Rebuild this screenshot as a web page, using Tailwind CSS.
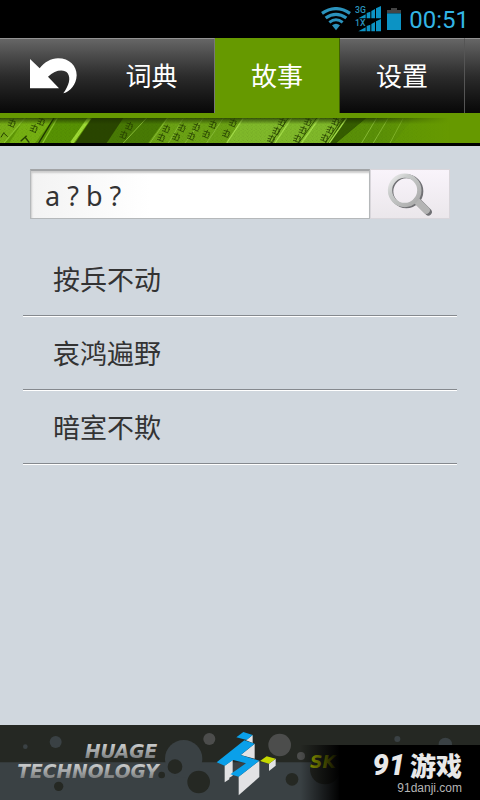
<!DOCTYPE html>
<html lang="zh-CN">
<head>
<meta charset="utf-8">
<meta name="viewport" content="width=device-width, initial-scale=1">
<title>故事</title>
<script src="https://cdn.jsdelivr.net/npm/@tailwindcss/browser@4"></script>
</head>
<body class="flex min-h-screen flex-col bg-[#d0d7de] font-['Noto_Sans','Noto_Sans_CJK_SC',sans-serif] text-[#333]">

<!-- Status bar -->
<div class="flex h-[38px] items-center justify-end bg-black pr-[11px] text-[#33b5e5]">
  <svg class="mr-1 h-[24px] w-[30px]" viewBox="0 0 90 72" fill="none" stroke="#2b93bd" aria-hidden="true">
    <path d="M3 19Q45 -9 87 19" stroke-width="10"/>
    <path d="M14 33Q45 11 76 33" stroke-width="10"/>
    <path d="M25 46Q45 31 65 46" stroke-width="9"/>
    <path d="M33 55Q45 46 57 55L45 70Z" fill="#2b93bd" stroke="none"/>
  </svg>
  <svg class="mr-[6px] h-[26px] w-[26px]" viewBox="0 0 78 78" fill="#0c93c4" aria-hidden="true">
    <text x="0" y="21" font-family="Roboto, sans-serif" font-size="26" font-weight="500" fill="#2b93bd">3G</text>
    <text x="0" y="60" font-family="Roboto, sans-serif" font-size="26" font-weight="500" fill="#2b93bd">1X</text>
    <path d="M10 37L32 25V37ZM35 21L46 17V37H35ZM49 15L60 9V37H49ZM63 7L78 0V37H63Z"/>
    <path d="M10 76L32 64V76ZM35 60L46 56V76H35ZM49 54L60 48V76H49ZM63 46L78 39V76H63Z"/>
  </svg>
  <svg class="mr-2 h-[22px] w-[14px]" viewBox="0 0 42 66" aria-hidden="true">
    <path d="M12 0H30V6H42V16H0V6H12Z" fill="#444"/>
    <path d="M0 16H42V66H0Z" fill="#0c93c4"/>
  </svg>
  <time class="pt-[2px] font-[Roboto,sans-serif] text-2xl leading-none">00:51</time>
</div>

<!-- Navigation -->
<header class="border-b-[3px] border-black bg-[#669900]">
  <nav class="flex h-[75px] text-[26px] text-white">
    <button type="button" aria-label="返回" class="flex w-[89px] items-center border-t border-[#929292] bg-linear-to-b from-[#666] via-[#2c2c2c] to-[#080808] pl-[30px]">
      <svg class="h-[36px] w-[47px]" viewBox="90 65 141 108" aria-hidden="true">
        <path d="M90 68L119 96C134 77 153 66 174 66C209 66 230 89 230 117C229 145 211 166 190 171C207 148 213 126 203 111C194 98 166 99 144 121L177 156H90Z" fill="#fff"/>
      </svg>
    </button>
    <a href="#dict" class="flex w-[126px] items-center justify-center border-t border-r border-t-[#929292] border-r-[#777] bg-linear-to-b from-[#666] via-[#2c2c2c] to-[#080808]">词典</a>
    <a href="#story" aria-current="page" class="flex w-[125px] items-center justify-center border-t border-r border-t-[#669900] border-r-[#3f6000] bg-[#669900]">故事</a>
    <a href="#settings" class="flex w-[125px] items-center justify-center border-t border-r border-t-[#929292] border-r-[#555] bg-linear-to-b from-[#666] via-[#2c2c2c] to-[#080808]">设置</a>
    <div class="flex-1 border-t border-[#929292] bg-linear-to-b from-[#666] via-[#2c2c2c] to-[#080808]"></div>
  </nav>
  <svg class="mt-[5px] block h-[25px] w-full" viewBox="0 0 1440 75" preserveAspectRatio="none" aria-hidden="true">
    <defs>
      <linearGradient id="shade" x2="0" y2="1"><stop stop-color="#1c3000" stop-opacity=".75"/><stop offset=".25" stop-color="#1c3000" stop-opacity="0"/></linearGradient>
      <linearGradient id="fade"><stop stop-color="#669900" stop-opacity="0"/><stop offset="1" stop-color="#669900"/></linearGradient>
      <g id="marks" fill="none" stroke="#254000" stroke-opacity=".8" stroke-width="3"><path d="M6 0L24 5L20 12M3 8L12 10M18 -3L9 18L20 22M1 15L10 17M24 10L18 20"/></g>
      <pattern id="grain" width="13" height="11" patternUnits="userSpaceOnUse"><path d="M0 1H3M7 4H9M3 8H5M10 9H12" stroke="#1e3500" stroke-opacity=".25" stroke-width="2"/></pattern>
    </defs>
    <path d="M0 0H1440V75H0Z" fill="#5f9705"/>
    <path d="M0 0H75L10 75H0Z" fill="#77ae16"/>
    <path d="M75 0H162L105 75H28Z" fill="#76b112"/>
    <path d="M162 0H270L212 75H118Z" fill="#579203"/>
    <path d="M162 0L116 75" stroke="#1c3300" stroke-width="4"/>
    <path d="M75 0L12 75M172 0L128 75" stroke="#8ac42a" stroke-width="4"/>
    <path d="M268 0L215 75" stroke="#9edb35" stroke-width="10"/>
    <path d="M276 0H395L320 75H225Z" fill="#294500"/>
    <path d="M370 0H500L445 75H320Z" fill="#487a04"/>
    <path d="M500 0H730L680 75H445Z" fill="#6ba214"/>
    <path d="M730 0H1030L985 75H680Z" fill="#80b92a"/>
    <path d="M1030 0H1100L1010 75H985Z" fill="#355d00"/>
    <path d="M1100 0H1240L1180 75H1010Z" fill="#5a9007"/>
    <path d="M440 0L370 75M503 0L450 75M550 0L505 75M610 0L555 75M670 0L620 75M1130 0L1085 75M1165 0L1120 75M1210 0L1170 75" stroke="#88bc35" stroke-width="3"/>
    <path d="M730 0L680 75M875 0L825 75M958 0L905 75M1040 0L988 75" stroke="#a5de4a" stroke-width="4"/>
    <path d="M865 0L813 75M950 0L896 75M1028 0L976 75" stroke="#355d00" stroke-width="3"/>
    <use href="#marks" x="22" y="6"/><path d="M12 43L3 58M12 46L23 56" stroke="#254000" stroke-width="3"/>
    <use href="#marks" x="110" y="1"/><use href="#marks" x="88" y="22"/><path d="M80 53L62 70M74 56L88 74" stroke="#254000" stroke-width="4"/>
    <use href="#marks" x="374" y="15"/><use href="#marks" x="357" y="41"/>
    <use href="#marks" x="485" y="23"/><use href="#marks" x="470" y="49"/><use href="#marks" x="532" y="20"/><use href="#marks" x="515" y="47"/>
    <use href="#marks" x="575" y="18"/><use href="#marks" x="560" y="45"/><use href="#marks" x="625" y="10"/><use href="#marks" x="605" y="39"/><use href="#marks" x="685" y="5"/><use href="#marks" x="665" y="37"/>
    <use href="#marks" x="832" y="3"/><use href="#marks" x="815" y="29"/><use href="#marks" x="800" y="53"/>
    <use href="#marks" x="910" y="2"/><use href="#marks" x="895" y="27"/><use href="#marks" x="878" y="52"/>
    <use href="#marks" x="993" y="1"/><use href="#marks" x="977" y="26"/><use href="#marks" x="960" y="50"/>
    <path d="M0 0H1350V75H0Z" fill="url(#grain)"/>
    <path d="M0 0H1350V75H0Z" fill="url(#shade)"/>
    <path d="M1120 0H1350V75H1120Z" fill="url(#fade)"/>
    <path d="M1349 0H1440V75H1349Z" fill="#669900"/>
  </svg>
</header>

<main class="flex-1">
  <form class="mx-[30px] mt-[23px] flex h-[50px]" role="search">
    <label for="q" class="sr-only">搜索</label>
    <input id="q" type="text" value="a ? b ?" class="min-w-0 flex-1 border border-t-2 border-[#b5b8ba] border-t-[#a2a4a6] bg-linear-to-r from-[#f3f3f3] to-white to-35% pt-[2px] pl-[14px] text-[27px] leading-[40px] text-[#333] shadow-[inset_1px_2px_2px_#ccc] outline-none">
    <button type="submit" aria-label="搜索" class="flex w-[80px] items-center justify-center border border-[#d9d6db] bg-linear-to-b from-[#f9f4fb] to-[#ebe7eb]">
      <svg class="h-[44px] w-[48px]" viewBox="138 36 144 132" fill="none" aria-hidden="true">
        <defs><linearGradient id="metal" x2="1" y2="1"><stop stop-color="#eee"/><stop offset=".3" stop-color="#c9cccb"/><stop offset="1" stop-color="#a9a9a9"/></linearGradient></defs>
        <circle cx="199" cy="94" r="45" stroke="#707074" stroke-width="12"/>
        <path d="M235 126L265 156" stroke="#707074" stroke-width="21" stroke-linecap="round"/>
        <path d="M230 122L259 151" stroke="#b4b4b4" stroke-width="21" stroke-linecap="round"/>
        <circle cx="194" cy="91" r="44" stroke="url(#metal)" stroke-width="13"/>
      </svg>
    </button>
  </form>

  <ul class="mx-[23px] mt-6 text-[27px]">
    <li class="border-b border-white"><a href="#1" class="flex h-[73px] items-center border-b border-[#85898e] pt-[2px] pl-[30px]">按兵不动</a></li>
    <li class="border-b border-white"><a href="#2" class="flex h-[73px] items-center border-b border-[#85898e] pt-[2px] pl-[30px]">哀鸿遍野</a></li>
    <li class="border-b border-white"><a href="#3" class="flex h-[73px] items-center border-b border-[#85898e] pt-[2px] pl-[30px]">暗室不欺</a></li>
  </ul>
</main>

<!-- Sponsor banner -->
<footer class="relative h-[75px] overflow-hidden bg-[#252823]">
  <svg class="block h-full w-full" viewBox="0 0 1440 225" preserveAspectRatio="xMidYMid slice" role="img" aria-label="Huage Technology">
    <defs>
      <linearGradient id="silver" x2="0" y2="1"><stop offset=".2" stop-color="#c4c6c6"/><stop offset=".8" stop-color="#7c7f80"/></linearGradient>
      <linearGradient id="dark"><stop stop-color="#000" stop-opacity="0"/><stop offset="1"/></linearGradient>
    </defs>
    <path d="M0 0H1440V225H0Z" fill="#252823"/>
    <path d="M0 112H1440V225H0Z" fill="#3a4144"/>
    <g fill="#3a4144"><circle cx="76" cy="65" r="7"/><circle cx="167" cy="51" r="18"/><circle cx="551" cy="101" r="56"/><circle cx="1192" cy="42" r="9"/><circle cx="1336" cy="58" r="20"/></g>
    <g fill="#4c4d4c"><circle cx="628" cy="42" r="18"/><circle cx="839" cy="60" r="34"/><circle cx="903" cy="93" r="12"/></g>
    <g fill="#252823"><circle cx="176" cy="184" r="14"/><circle cx="485" cy="150" r="10"/><circle cx="525" cy="125" r="22"/><circle cx="596" cy="171" r="34"/><circle cx="876" cy="163" r="19"/><circle cx="975" cy="133" r="45"/></g>
    <g font-family="DejaVu Sans, sans-serif" font-weight="700" font-style="italic" font-size="56">
      <text x="472" y="100" text-anchor="end" fill="url(#silver)">HUAGE</text>
      <text x="476" y="160" text-anchor="end" fill="url(#silver)">TECHNOLOGY</text>
      <text x="930" y="130" fill="#a8b400" font-size="52">SK</text>
    </g>
    <g fill="#e2e2e4">
      <path d="M758 30V54L738 46ZM764 56V101L722 90Z"/>
      <path d="M674 122L698 105V152L688 158V163L674 172Z"/>
      <path d="M716 155L778 107V156L716 211Z"/>
      <path d="M807 116L827 101V122L807 138Z"/>
    </g>
    <g fill="#0aa0ea">
      <path d="M709 37L730 21L758 30L740 45Z"/>
      <path d="M733 46L764 56L722 90L778 107L716 155L691 148L738 115L700 105L674 122L650 112Z"/>
    </g>
    <path d="M780 108L800 94L827 101L807 116Z" fill="#c5d800"/>
    <path d="M900 60H1020V225H900Z" fill="url(#dark)"/>
    <path d="M1019 60H1440V225H1019Z" fill="#000"/>
  </svg>
  <div class="absolute right-[18px] bottom-[5px] text-right">
    <div class="flex items-center justify-end gap-[5px] leading-[32px] font-black text-[#e8e8e8]">
      <span class="font-[Roboto,sans-serif] text-[29px] italic">91</span>
      <span class="font-['Noto_Sans_CJK_SC',sans-serif] text-[26px]">游戏</span>
    </div>
    <div class="font-['Liberation_Sans',sans-serif] text-xs leading-[14px] text-[#b5b5b5]">91danji.com</div>
  </div>
</footer>
</body>
</html>
